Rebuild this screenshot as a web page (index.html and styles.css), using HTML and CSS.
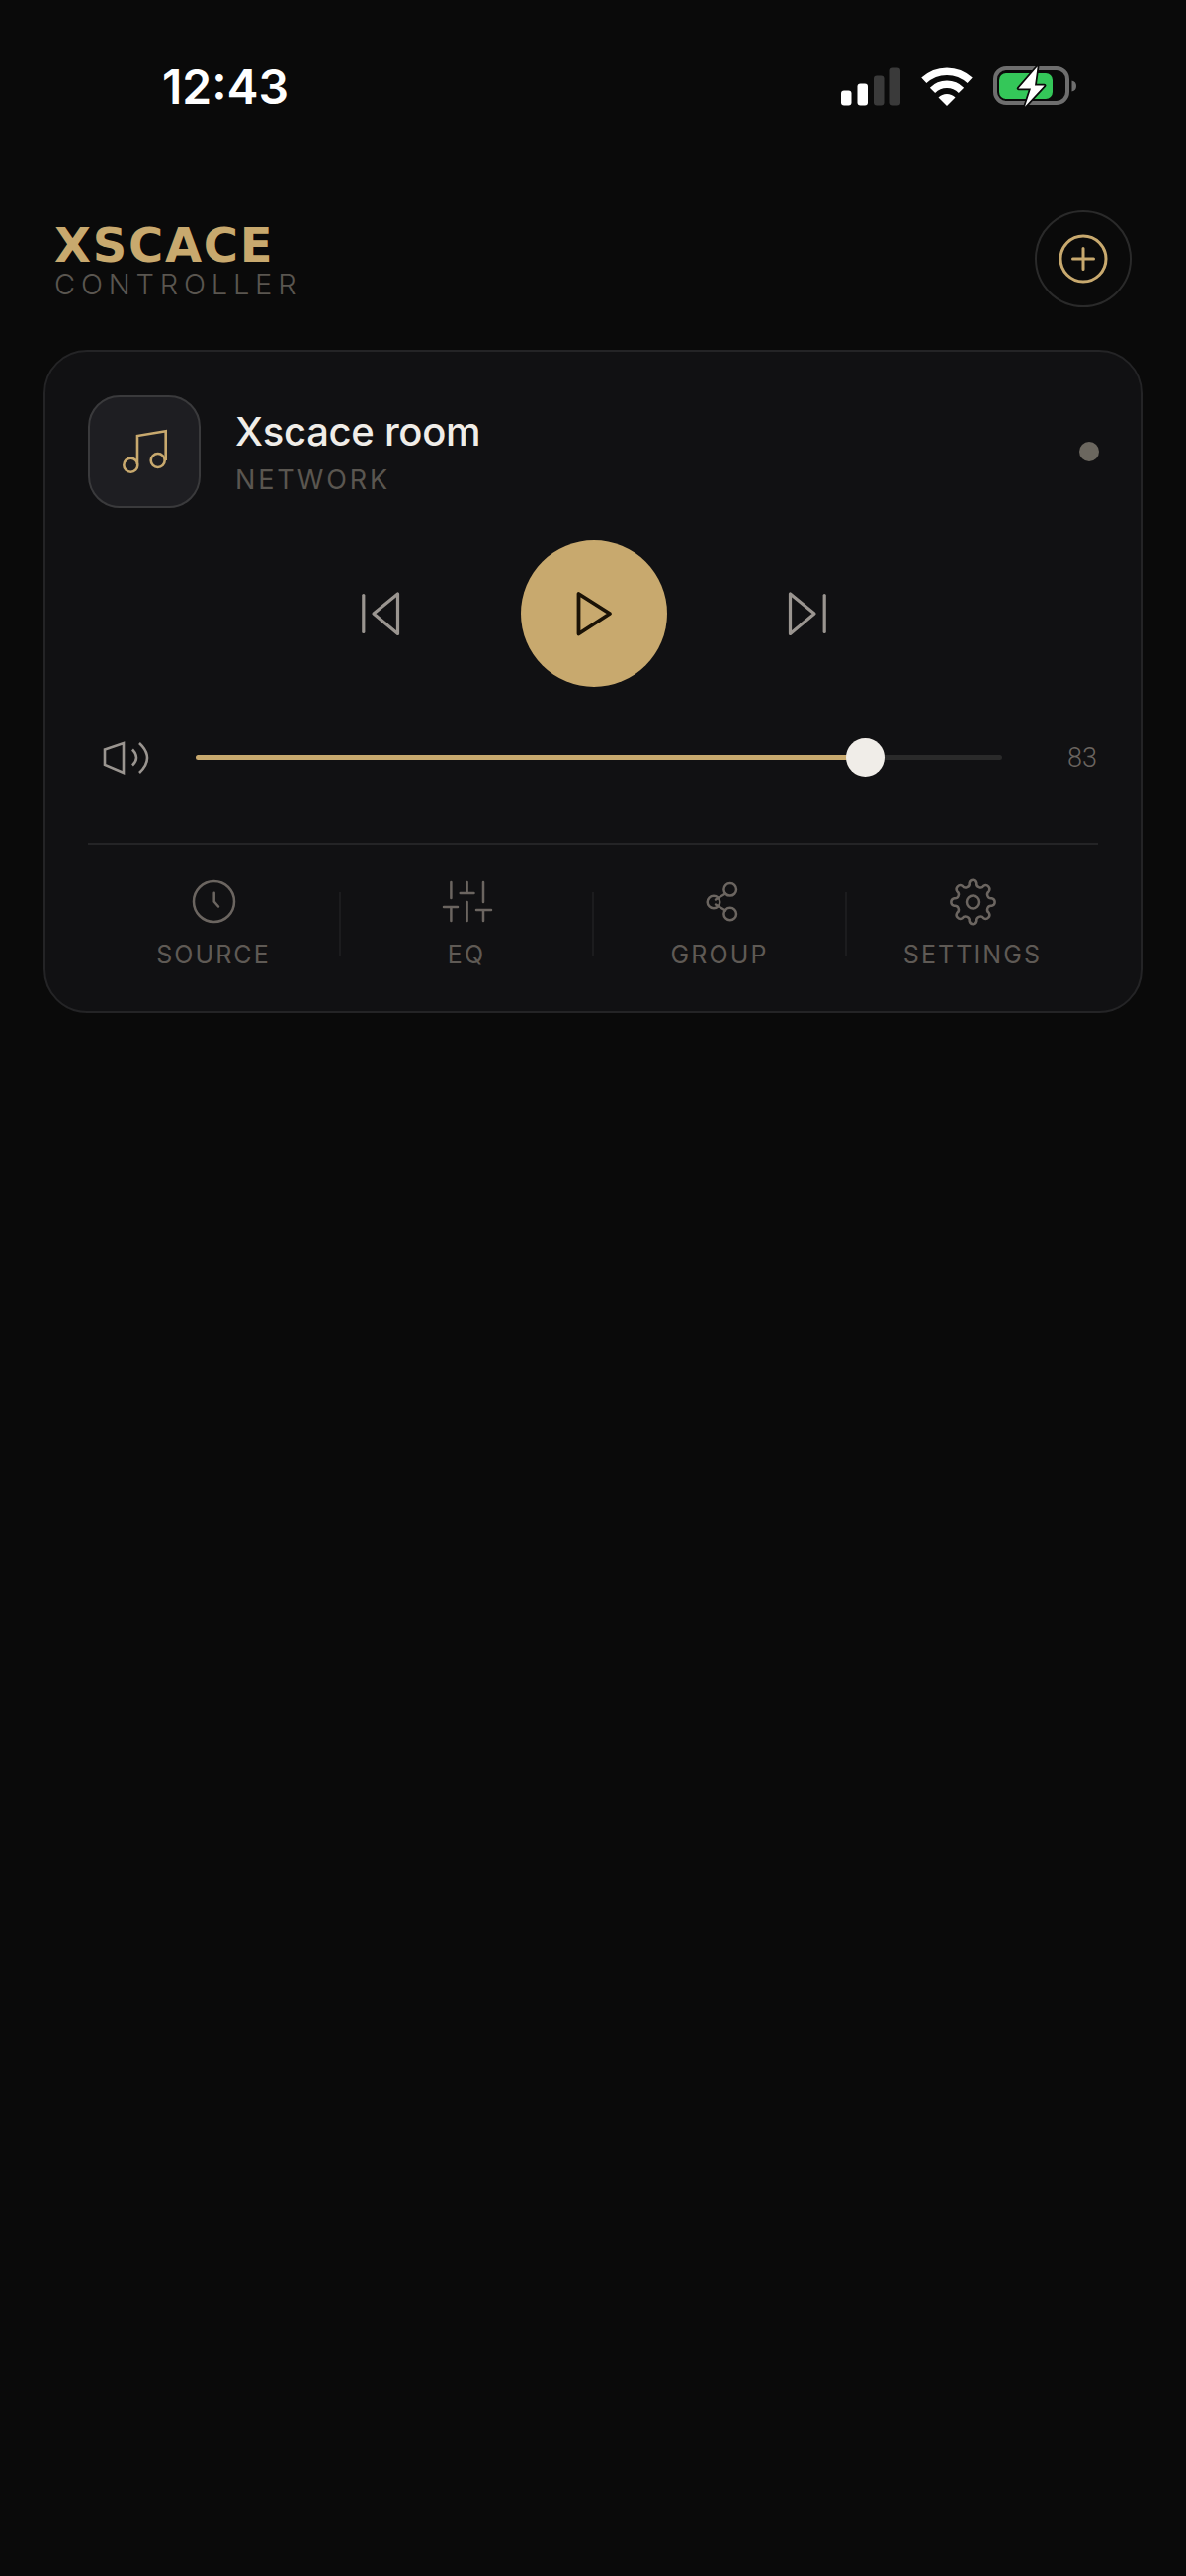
FILE: index.html
```html
<!DOCTYPE html>
<html lang="en">
<head>
<meta charset="utf-8">
<title>Xscace Controller</title>
<link rel="stylesheet" href="styles.css">
</head>
<body>
<div class="status">
  <span class="time">12:43</span>
  <div class="status-icons">
    <svg class="ic-signal" width="60" height="42" viewBox="0 0 60 42">
      <rect class="on" x="0" y="25.5" width="10.5" height="15" rx="3"/>
      <rect class="on" x="16.5" y="18.5" width="10.5" height="22" rx="3"/>
      <rect class="off" x="33" y="10.5" width="10.5" height="30" rx="3"/>
      <rect class="off" x="49.5" y="2.5" width="10.5" height="38" rx="3"/>
    </svg>
    <svg class="ic-wifi" width="52" height="42" viewBox="0 0 52 42">
      <path d="M2.8 15.3A34 34 0 0 1 49.2 15.3"/>
      <path d="M11.5 25.3A20.5 20.5 0 0 1 40.5 25.3"/>
      <path class="dot" d="M26 41L17.5 32.5A12 12 0 0 1 34.5 32.5Z"/>
    </svg>
    <svg class="ic-batt" width="85" height="44" viewBox="0 0 85 44">
      <rect class="shell" x="2" y="4" width="73" height="35" rx="11"/>
      <rect class="level" x="6" y="9" width="54" height="26" rx="7"/>
      <path class="nub" d="M79.500 16.500C82.500 17 84 19 84 22C84 25 82.500 27 79.500 27.500Z"/>
      <path class="bolt" d="M44.700 2.300L25.500 24.500H38L32 42.700L51.700 21.500H42Z"/>
    </svg>
  </div>
</div>

<header class="top">
  <div class="brand">
    <div class="brand-name">XSCACE</div>
    <div class="brand-sub">CONTROLLER</div>
  </div>
  <button class="add" type="button" aria-label="Add">
    <svg width="60" height="60" viewBox="0 0 60 60">
      <circle cx="30" cy="30" r="23"/>
      <path d="M30 19.500V40.500M19.500 30H40.500"/>
    </svg>
  </button>
</header>

<section class="card">
  <div class="room">
    <div class="thumb">
      <svg width="60" height="60" viewBox="0 0 60 60">
        <circle cx="16.300" cy="43.700" r="7"/>
        <circle cx="43.700" cy="39" r="7"/>
        <path d="M23 43V14L51.700 9.300V39"/>
      </svg>
    </div>
    <div class="room-text">
      <div class="room-name">Xscace room</div>
      <div class="room-type">NETWORK</div>
    </div>
    <span class="dot-status"></span>
  </div>

  <div class="controls">
    <svg class="ctl" width="39" height="48" viewBox="0 0 39 48">
      <path d="M1.800 5.500V42.500"/>
      <path d="M36.500 4V44.500L12 24Z"/>
    </svg>
    <button class="play" type="button" aria-label="Play">
      <svg width="48" height="48" viewBox="0 0 48 48">
        <path d="M8.500 4V44.500L40 24Z"/>
      </svg>
    </button>
    <svg class="ctl" width="39" height="48" viewBox="0 0 39 48">
      <path d="M37.200 5.500V42.500"/>
      <path d="M2.500 4V44.500L27 24Z"/>
    </svg>
  </div>

  <div class="volume">
    <svg class="speaker" width="44" height="32" viewBox="0 0 44 32">
      <path d="M1 7.500L20 1V31L1 23Z"/>
      <path d="M29 7.500Q37 16 29 23.500"/>
      <path d="M36 1Q52 16 36 31"/>
    </svg>
    <div class="track">
      <div class="fill" style="width:83%"></div>
      <span class="knob"></span>
    </div>
    <span class="vol-num">83</span>
  </div>

  <nav class="tabs">
    <div class="tab">
      <svg width="48" height="48" viewBox="0 0 48 48">
        <circle cx="24.500" cy="23.500" r="20.500"/>
        <path d="M24.700 14.700V23.500L29 28.500"/>
      </svg>
      <span class="tab-label">SOURCE</span>
    </div>
    <span class="sep"></span>
    <div class="tab">
      <svg width="48" height="48" viewBox="0 0 48 48">
        <path d="M8.400 4V20M1 29H15M8.400 29V43M24.600 4V15M17.700 15H31.500M24.600 24V43M41 4V24M34 32H49M41 32V43"/>
      </svg>
      <span class="tab-label">EQ</span>
    </div>
    <span class="sep"></span>
    <div class="tab">
      <svg width="48" height="48" viewBox="0 0 48 48">
        <circle cx="34.700" cy="11.300" r="6.300"/>
        <circle cx="18" cy="24" r="6.300"/>
        <circle cx="34.700" cy="36" r="6.300"/>
        <path d="M20 21.500L30 15.500M20 26.500L30 32.500"/>
      </svg>
      <span class="tab-label">GROUP</span>
    </div>
    <span class="sep"></span>
    <div class="tab">
      <svg width="48" height="48" viewBox="-24.500 -24 48 48">
        <path d="M-3.800 -19.130A3.900 3.900 0 0 1 3.800 -19.130A3.900 3.900 0 0 0 10.830 -16.210A3.900 3.900 0 0 1 16.210 -10.830A3.900 3.900 0 0 0 19.130 -3.800A3.900 3.900 0 0 1 19.130 3.800A3.900 3.900 0 0 0 16.210 10.830A3.900 3.900 0 0 1 10.830 16.210A3.900 3.900 0 0 0 3.800 19.130A3.900 3.900 0 0 1 -3.800 19.130A3.900 3.900 0 0 0 -10.830 16.210A3.900 3.900 0 0 1 -16.210 10.830A3.900 3.900 0 0 0 -19.130 3.800A3.900 3.900 0 0 1 -19.130 -3.800A3.900 3.900 0 0 0 -16.210 -10.830A3.900 3.900 0 0 1 -10.830 -16.210A3.900 3.900 0 0 0 -3.800 -19.130Z"/>
        <circle cx="0" cy="0" r="6.500"/>
      </svg>
      <span class="tab-label">SETTINGS</span>
    </div>
  </nav>
</section>
</body>
</html>
```
FILE: styles.css
```css
* { box-sizing: border-box; }
html, body { margin: 0; padding: 0; }
body {
  width: 1200px;
  height: 2607px;
  background: #0a0a0a;
  font-family: Inter, "Liberation Sans", sans-serif;
  overflow: hidden;
}
svg { display: block; overflow: visible; }
button { padding: 0; margin: 0; cursor: pointer; }

.status {
  height: 174px;
  padding: 0 110px 0 164px;
  display: flex;
  align-items: center;
  justify-content: space-between;
}
.time {
  color: #fff;
  font-size: 48px;
  font-weight: 600;
}
.status-icons { display: flex; align-items: center; gap: 21px; }
.ic-signal .on { fill: #fff; }
.ic-signal .off { fill: #3a3a3a; }
.ic-wifi path { fill: none; stroke: #fff; stroke-width: 7.5; }
.ic-wifi .dot { fill: #fff; stroke: none; }
.ic-batt .shell { fill: none; stroke: #6e6e6e; stroke-width: 4; }
.ic-batt .level { fill: #34c759; }
.ic-batt .nub { fill: #6e6e6e; }
.ic-batt .bolt { fill: #fff; stroke: #0a0a0a; stroke-width: 3.500; paint-order: stroke; stroke-linejoin: round; }

.top {
  padding: 39px 55px 43px;
  display: flex;
  align-items: center;
  justify-content: space-between;
}
.brand { display: flex; flex-direction: column; gap: 2px; padding-top: 9px; }
.brand-name {
  color: #c8a96e;
  font-family: "DejaVu Sans", "Liberation Sans", sans-serif;
  font-size: 48px;
  font-weight: 700;
  line-height: 40px;
  letter-spacing: 1.700px;
}
.brand-sub {
  color: #5a5650;
  font-size: 29px;
  font-weight: 300;
  line-height: 35px;
  letter-spacing: 5.800px;
}
.add {
  width: 98px;
  height: 98px;
  border-radius: 50%;
  border: 2px solid #2a2a2a;
  background: transparent;
  display: flex;
  align-items: center;
  justify-content: center;
}
.add circle, .add path { fill: none; stroke: #c8a96e; stroke-width: 3; stroke-linecap: round; }

.card {
  margin: 0 44px;
  padding: 44px 43px 42px;
  background: #111113;
  border: 2px solid #242426;
  border-radius: 44px;
}
.room { display: flex; align-items: center; gap: 35px; }
.thumb {
  width: 114px;
  height: 114px;
  flex: none;
  border-radius: 32px;
  background: #1e1e22;
  border: 2px solid #3a3a3c;
  display: flex;
  align-items: center;
  justify-content: center;
}
.thumb circle, .thumb path { fill: none; stroke: #c8a96e; stroke-width: 2.600; }
.room-text { flex: 1; }
.room-name {
  color: #f0ede8;
  font-size: 40px;
  font-weight: 500;
  line-height: 48px;
  letter-spacing: -0.3px;
}
.room-type {
  color: #5a5650;
  font-size: 27px;
  font-weight: 400;
  line-height: 32px;
  letter-spacing: 2.900px;
  margin-top: 9px;
}
.dot-status {
  width: 20px;
  height: 20px;
  border-radius: 50%;
  background: #6b675f;
  flex: none;
  margin-right: -1px;
}

.controls {
  margin-top: 33px;
  display: flex;
  align-items: center;
  justify-content: center;
  gap: 122px;
  padding-left: 2px;
}
.ctl path { fill: none; stroke: #9a9590; stroke-width: 3.200; stroke-linejoin: round; stroke-linecap: round; }
.play {
  width: 148px;
  height: 148px;
  border-radius: 50%;
  border: 0;
  background: #c8a96e;
  display: flex;
  align-items: center;
  justify-content: center;
}
.play path { fill: none; stroke: #1a1206; stroke-width: 3.800; stroke-linejoin: round; }

.volume {
  margin-top: 52px;
  height: 39px;
  padding-left: 16px;
  display: flex;
  align-items: center;
}
.speaker { flex: none; margin-right: 49px; }
.speaker path { fill: none; stroke: #9a9590; stroke-width: 2.600; }
.track {
  flex: 1;
  height: 5px;
  border-radius: 3px;
  background: #2a2a2a;
  position: relative;
}
.fill { height: 100%; border-radius: 3px; background: #c8a96e; }
.knob {
  position: absolute;
  left: 83%;
  top: 50%;
  width: 39px;
  height: 39px;
  margin: -19.500px 0 0 -19.500px;
  border-radius: 50%;
  background: #f0ede8;
}
.vol-num {
  flex: none;
  width: 32px;
  margin-left: 64px;
  margin-right: 1px;
  color: #6b6560;
  font-family: Roboto, sans-serif;
  font-size: 27px;
  font-weight: 300;
  text-align: right;
}

.tabs {
  margin-top: 67px;
  padding-top: 34px;
  border-top: 2px solid #242426;
  display: flex;
  align-items: center;
}
.tab {
  flex: 1;
  display: flex;
  flex-direction: column;
  align-items: center;
  gap: 14px;
}
.tab svg * { fill: none; stroke: #6b6560; stroke-width: 2.500; stroke-linecap: round; }
.tab-label {
  color: #5f5a55;
  font-size: 25px;
  line-height: 30px;
  letter-spacing: 2.100px;
}
.sep {
  width: 2px;
  height: 65px;
  flex: none;
  background: #1c1c1e;
}
```
